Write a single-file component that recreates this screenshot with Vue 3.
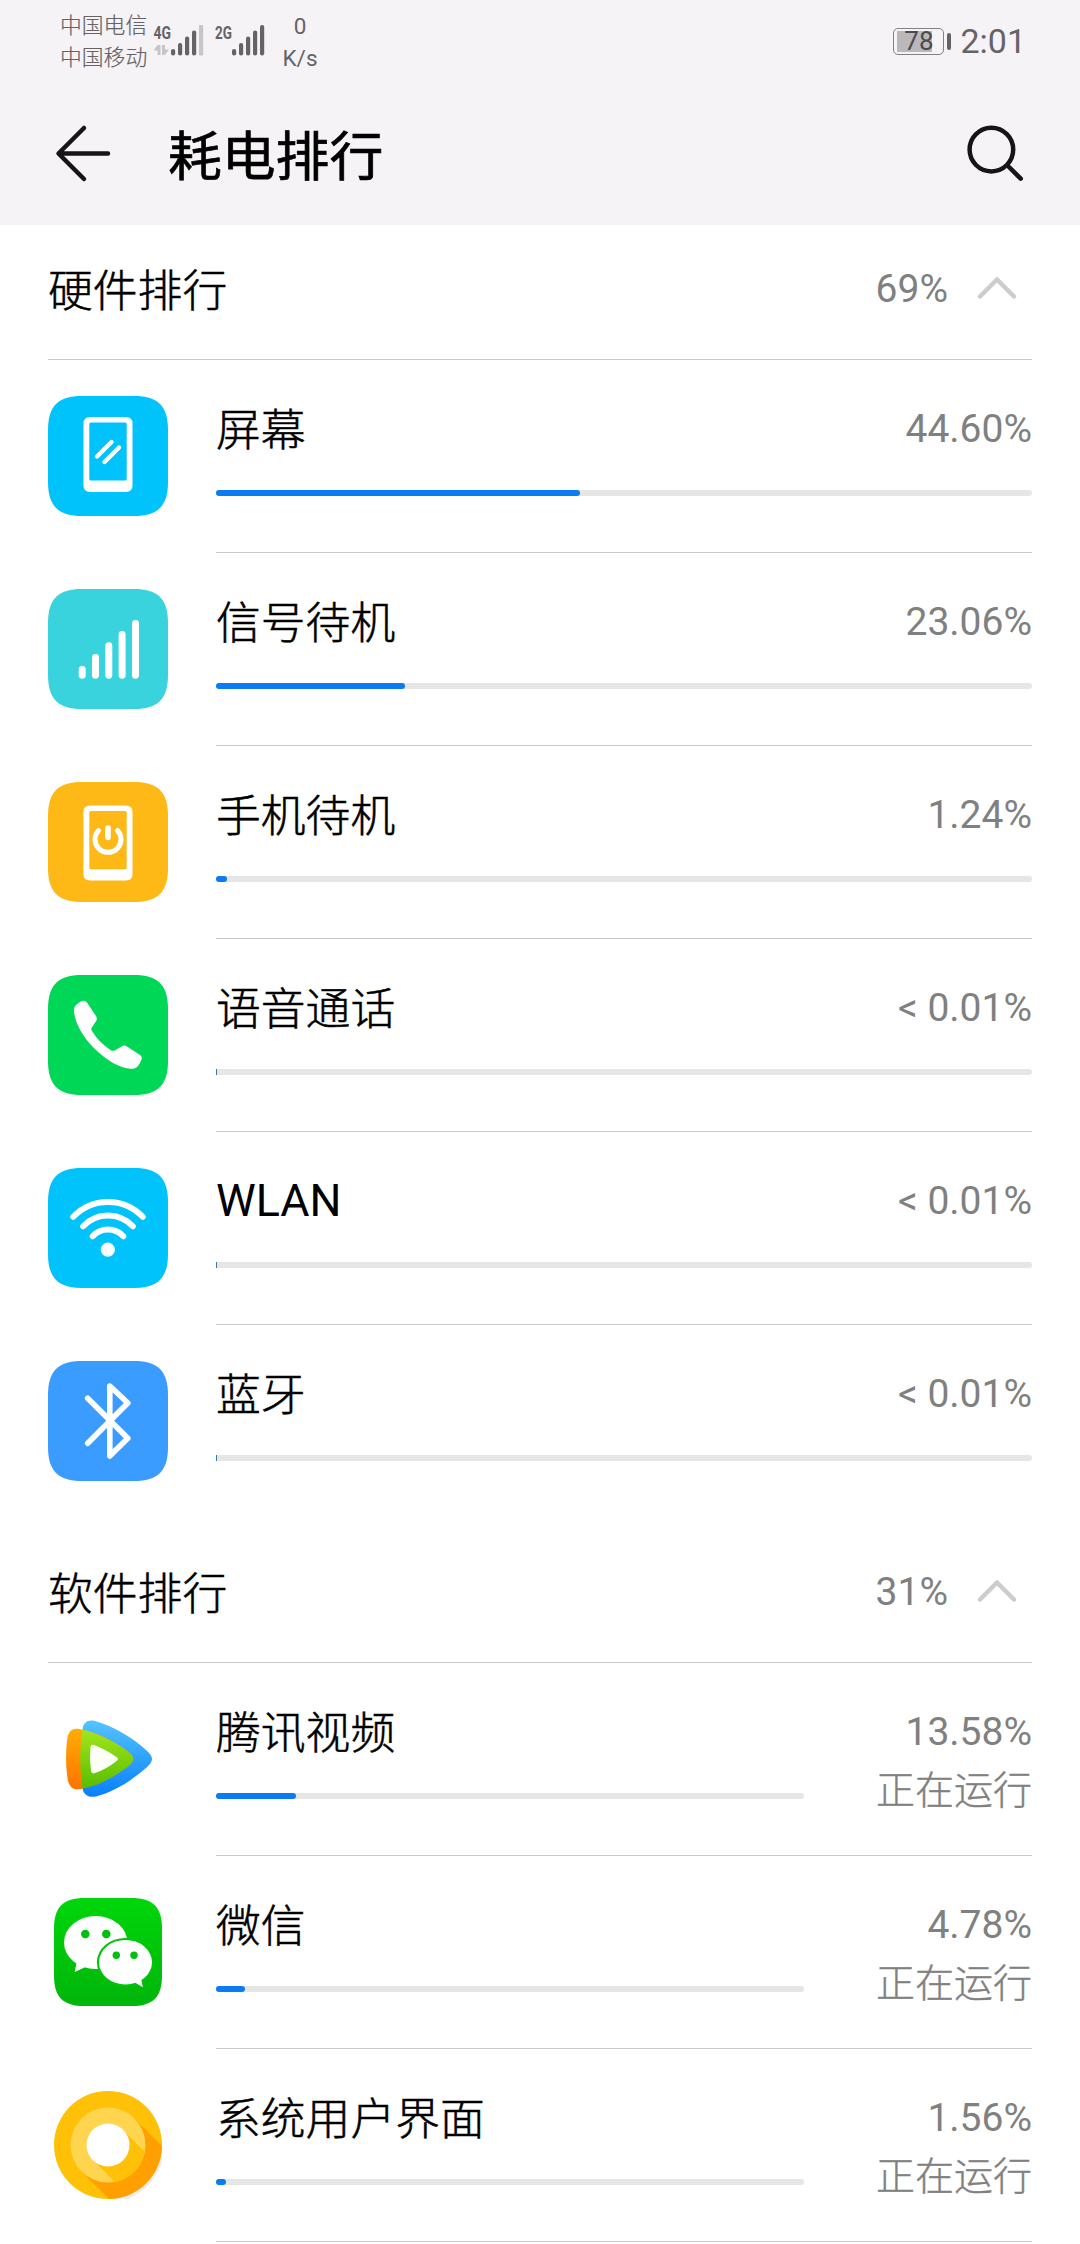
<script setup>
const SQUIRCLE =
  'M34 0H86C110 0 120 10 120 34V86C120 110 110 120 86 120H34C10 120 0 110 0 86V34C0 10 10 0 34 0Z'

const sections = [
  {
    title: '硬件排行',
    total: '69%',
    items: [
      { icon: 'screen', color: '#00c3fb', name: '屏幕', value: '44.60%', fill: 44.6 },
      { icon: 'signal', color: '#38d3dd', name: '信号待机', value: '23.06%', fill: 23.15 },
      { icon: 'standby', color: '#ffb917', name: '手机待机', value: '1.24%', fill: 1.35 },
      { icon: 'call', color: '#00d757', name: '语音通话', value: '< 0.01%', fill: 0 },
      { icon: 'wlan', color: '#00c3fb', name: 'WLAN', value: '< 0.01%', fill: 0, latin: true },
      { icon: 'bluetooth', color: '#3b9cff', name: '蓝牙', value: '< 0.01%', fill: 0 },
    ],
  },
  {
    title: '软件排行',
    total: '31%',
    items: [
      { icon: 'video', name: '腾讯视频', value: '13.58%', fill: 13.6, status: '正在运行' },
      { icon: 'wechat', name: '微信', value: '4.78%', fill: 4.9, status: '正在运行' },
      { icon: 'system', name: '系统用户界面', value: '1.56%', fill: 1.7, status: '正在运行' },
    ],
  },
]
</script>

<template>
  <div class="page">
    <header class="top">
      <div class="statusbar">
        <div class="carriers">
          <span>中国电信</span>
          <span>中国移动</span>
        </div>
        <svg class="signals" width="120" height="40" viewBox="150 21 120 40">
          <g fill="#666367">
            <text x="153.5" y="39" class="net" textLength="17.5" lengthAdjust="spacingAndGlyphs">4G</text>
            <text x="215" y="39" class="net" textLength="17" lengthAdjust="spacingAndGlyphs">2G</text>
            <rect x="171" y="49" width="4.2" height="6.5" rx="2" />
            <rect x="178" y="43" width="4.2" height="12.5" rx="2" />
            <rect x="185" y="36.5" width="4.2" height="19" rx="2" />
            <rect x="192" y="30.5" width="4.2" height="25" rx="2" />
            <rect x="232" y="49" width="4.2" height="6.5" rx="2" />
            <rect x="239" y="43" width="4.2" height="12.5" rx="2" />
            <rect x="246" y="36.5" width="4.2" height="19" rx="2" />
            <rect x="253" y="30.5" width="4.2" height="25" rx="2" />
            <rect x="260" y="25" width="4.2" height="30.5" rx="2" />
          </g>
          <g fill="#c8c5c9">
            <rect x="199" y="25" width="4.2" height="30.5" rx="1" />
            <path d="M157.500 45H160.500V55H157.500V50.500H153.500Z" />
            <path d="M162 45H165V49.500H169L165 55H162Z" />
          </g>
        </svg>
        <div class="speed">
          <span>0</span>
          <span>K/s</span>
        </div>
        <div class="battery">
          <div class="cell"><span>78</span></div>
          <div class="nub"></div>
        </div>
        <div class="clock">2:01</div>
      </div>
      <div class="titlebar">
        <svg class="back" width="60" height="60" viewBox="0 0 60 60">
          <path d="M31 4L5.500 29.500L31 55M6 29.500H55" />
        </svg>
        <h1>耗电排行</h1>
        <svg class="search" width="60" height="60" viewBox="0 0 60 60">
          <circle cx="25.400" cy="25.600" r="21.800" />
          <path d="M41.500 41.500L54.700 54.700" />
        </svg>
      </div>
    </header>

    <section v-for="section in sections" :key="section.title" class="section">
      <div class="heading">
        <h2>{{ section.title }}</h2>
        <span class="total">{{ section.total }}</span>
        <svg class="chevron" width="42" height="26" viewBox="0 0 42 26">
          <path d="M4 20.500L21 3.500L38 20.500" />
        </svg>
      </div>

      <div
        v-for="item in section.items"
        :key="item.name"
        class="row"
        :class="{ running: item.status }"
      >
        <svg class="icon" width="120" height="120" viewBox="0 0 120 120">
          <path v-if="item.color" :d="SQUIRCLE" :fill="item.color" />

          <g v-if="item.icon === 'screen'">
            <path
              fill="#fff"
              fill-rule="evenodd"
              d="M42 21H78Q84.500 21 84.500 27.500V89.500Q84.500 96 78 96H42Q35.500 96 35.500 89.500V27.500Q35.500 21 42 21ZM43 26.500Q41.300 26.500 41.300 28V83Q41.300 84.600 43 84.600H77Q78.700 84.600 78.700 83V28Q78.700 26.500 77 26.500Z"
            />
            <path class="line" stroke-width="4.400" d="M49 60.500L63.500 46M56.500 66L71 51.500" />
          </g>

          <g v-else-if="item.icon === 'signal'" fill="#fff">
            <rect x="30.700" y="77" width="7" height="12.700" rx="3.400" />
            <rect x="44" y="65" width="7" height="24.700" rx="3.400" />
            <rect x="57.300" y="53.300" width="7" height="36.400" rx="3.400" />
            <rect x="70.600" y="42" width="7" height="47.700" rx="3.400" />
            <rect x="84" y="31" width="7" height="58.700" rx="3.400" />
          </g>

          <g v-else-if="item.icon === 'standby'">
            <path
              fill="#fff"
              fill-rule="evenodd"
              d="M42 23.500H78Q84.500 23.500 84.500 30V92Q84.500 98.500 78 98.500H42Q35.500 98.500 35.500 92V30Q35.500 23.500 42 23.500ZM43 29Q41.300 29 41.300 30.500V85.500Q41.300 87.200 43 87.200H77Q78.700 87.200 78.700 85.500V30.500Q78.700 29 77 29Z"
            />
            <path class="line" stroke-width="5" d="M50.500 48.500A13 13 0 1 0 69.500 48.500" />
            <path class="line" stroke-width="5.600" d="M60 46V55.500" />
          </g>

          <path
            v-else-if="item.icon === 'call'"
            fill="#fff"
            d="M28 30C31 27.500 33 26.200 35 25.800C37 25.300 38.500 26.700 39.500 28.300L48 41C49.500 43.500 49 45 47.500 47L43.800 52.500C43 54 43.300 55 44 56C49 64 55 70 62.500 75C64.500 76.300 66 76 67.500 75L74.500 71C76.500 70.200 77.500 70.500 79 71.500L92 80C94 81.500 94.200 83 93.300 85C92.500 87 91.500 89 90 91C88 93.500 85 94 82 93.800C70 92 60 86 49 76C37 65 27 50 26 36C26 33 26.500 31.500 28 30Z"
          />

          <g v-else-if="item.icon === 'wlan'">
            <path
              class="line"
              stroke-width="6"
              d="M25.300 48.800A48 48 0 0 1 94.700 48.800M35.200 58.300A34 34 0 0 1 84.800 58.300M44.700 68.200A21 21 0 0 1 75.300 68.200"
            />
            <circle cx="59.800" cy="81.700" r="7.100" fill="#fff" />
          </g>

          <path
            v-else-if="item.icon === 'bluetooth'"
            class="line"
            stroke-width="5.600"
            d="M39.700 37.300L79.800 77.300L61.800 95V25L79.800 42L39.700 82.300"
          />

          <g v-else-if="item.icon === 'video'">
            <defs>
              <linearGradient id="vBlue" x1="0" y1="0" x2="0" y2="1">
                <stop offset="0" stop-color="#54c4ff" />
                <stop offset="1" stop-color="#087fff" />
              </linearGradient>
              <linearGradient id="vOrange" x1="0" y1="0" x2="0" y2="1">
                <stop offset="0" stop-color="#ffae00" />
                <stop offset="1" stop-color="#ff7300" />
              </linearGradient>
              <linearGradient id="vGreen" x1="0" y1="0" x2="0" y2="1">
                <stop offset="0" stop-color="#a5e61c" />
                <stop offset="1" stop-color="#55bd00" />
              </linearGradient>
              <clipPath id="vClip">
                <path d="M34.500 31C35 24 39 20.800 46 21.800C65 27 85 39 98 51C106 58 106 62 98 69C82 83 65 93 48 97.500C40 99 35 95 34.500 89C31.500 70 31.500 50 34.500 31Z" />
              </clipPath>
            </defs>
            <path fill="url(#vBlue)" d="M34.500 31C35 24 39 20.800 46 21.800C65 27 85 39 98 51C106 58 106 62 98 69C82 83 65 93 48 97.500C40 99 35 95 34.500 89C31.500 70 31.500 50 34.500 31Z" />
            <path fill="url(#vOrange)" d="M19.500 38C21 32 24 29.300 30 29.800C48 33 66 42 80 52.500C87 58 87 62 80 67.500C66 78 48 88 30 90.300C24 90.500 21.500 87 20 82C17.500 68 17.500 52 19.500 38Z" />
            <path fill="url(#vGreen)" clip-path="url(#vClip)" d="M19.500 38C21 32 24 29.300 30 29.800C48 33 66 42 80 52.500C87 58 87 62 80 67.500C66 78 48 88 30 90.300C24 90.500 21.500 87 20 82C17.500 68 17.500 52 19.500 38Z" />
            <path fill="#fbfff5" d="M42.500 48Q43 45 46 46Q58 50.500 68.500 58Q71.500 60 68.500 62Q58 70.500 46.500 74.300Q43.500 75 43 72Q41.200 60 42.500 48Z" />
          </g>

          <g v-else-if="item.icon === 'wechat'">
            <defs>
              <linearGradient id="wGreen" x1="0" y1="0" x2="0" y2="1">
                <stop offset="0" stop-color="#00d60a" />
                <stop offset="1" stop-color="#00b50a" />
              </linearGradient>
            </defs>
            <path :d="SQUIRCLE" fill="url(#wGreen)" transform="translate(6 6) scale(.9)" />
            <g fill="#fff">
              <ellipse cx="47.700" cy="50.500" rx="31.700" ry="26.500" />
              <path d="M28.700 70L26.700 80L37 75.200Z" />
            </g>
            <ellipse cx="77.500" cy="70.200" rx="28.600" ry="24.200" fill="#00c40a" />
            <g fill="#fff">
              <ellipse cx="77.500" cy="70.200" rx="26.500" ry="22.300" />
              <path d="M86 90L94.800 95.200L93 86Z" />
            </g>
            <g fill="#00c00a">
              <circle cx="37.300" cy="42" r="4.300" />
              <circle cx="58.300" cy="42" r="4.300" />
              <circle cx="68.300" cy="63.300" r="3.700" />
              <circle cx="86" cy="63.300" r="3.700" />
            </g>
          </g>

          <g v-else>
            <defs>
              <clipPath id="oOuter"><circle cx="60" cy="60" r="54" /></clipPath>
              <clipPath id="oMiddle"><circle cx="60" cy="60" r="37.500" /></clipPath>
            </defs>
            <path fill="#ededf4" d="M114 64V78Q104 104 80 114H64Z" />
            <circle cx="60" cy="60" r="54" fill="#ffc107" />
            <path clip-path="url(#oOuter)" fill="#ffa000" d="M86.500 33.500L126.500 73.500V126.500H73.500L33.500 86.500Z" />
            <circle cx="60" cy="60" r="37.500" fill="#ffd54f" />
            <path clip-path="url(#oMiddle)" fill="#ffc107" d="M75.100 44.900L115 85V115H85L44.900 75.100Z" />
            <circle cx="60" cy="60" r="21.500" fill="#fff" />
          </g>
        </svg>

        <div class="body">
          <span class="name" :class="{ latin: item.latin }">{{ item.name }}</span>
          <span class="value">{{ item.value }}</span>
          <div class="track">
            <div class="fill" :class="{ sliver: !item.fill }" :style="{ width: item.fill + '%' }"></div>
          </div>
          <span v-if="item.status" class="status">{{ item.status }}</span>
        </div>
      </div>
    </section>
  </div>
</template>

<style>
body {
  margin: 0;
  background: #fff;
}
</style>

<style scoped>
.page {
  width: 1080px;
  height: 2244px;
  overflow: hidden;
  background: #fff;
  color: #000;
  font-family: Roboto, 'Noto Sans CJK SC', sans-serif;
}
h1,
h2 {
  margin: 0;
}
svg {
  display: block;
  flex: none;
}

.top {
  height: 225px;
  background: #f6f3f7;
}
.statusbar {
  display: flex;
  align-items: center;
  height: 82px;
  padding: 0 54px 0 60px;
  box-sizing: border-box;
  color: #666367;
}
.carriers {
  display: flex;
  flex-direction: column;
  width: 90px;
  padding-top: 1px;
  font-size: 21.800px;
  font-weight: 300;
  line-height: 32px;
  white-space: nowrap;
  -webkit-text-stroke: 0.2px currentColor;
}
.net {
  font: 700 19px Roboto, sans-serif;
}
.speed {
  display: flex;
  flex-direction: column;
  align-items: center;
  width: 60px;
  padding-top: 2px;
  font-size: 22.500px;
  line-height: 32px;
}
.battery {
  display: flex;
  align-items: center;
  gap: 3px;
  margin-left: auto;
}
.cell {
  display: flex;
  align-items: center;
  justify-content: center;
  width: 51px;
  height: 27px;
  box-sizing: border-box;
  border: 1.500px solid #848185;
  border-radius: 5px;
  background: linear-gradient(#bbb8bc, #bbb8bc) 3px 2px / 35px 21px no-repeat;
  color: #4c4a4d;
  font-size: 26px;
  line-height: 26px;
}
.nub {
  width: 4px;
  height: 17px;
  border-radius: 2px;
  background: #666367;
}
.clock {
  margin-left: 9px;
  font-size: 34px;
  line-height: 40px;
}
.titlebar {
  display: flex;
  align-items: center;
  height: 143px;
  padding: 0 54px 0 53px;
}
.back,
.search {
  fill: none;
  stroke: #151515;
  stroke-width: 4.500px;
  stroke-linecap: round;
  stroke-linejoin: round;
}
h1 {
  flex: 1;
  margin-left: 55px;
  padding-top: 9px;
  font-size: 53.800px;
  font-weight: 400;
  line-height: 80px;
  -webkit-text-stroke: 0.7px currentColor;
}

.section + .section {
  margin-top: 10px;
}
.heading {
  display: flex;
  align-items: center;
  height: 128px;
  margin: 0 48px;
  padding: 0 14px 6px 0;
  border-bottom: 1px solid #c9c9c9;
}
h2 {
  flex: 1;
  padding-bottom: 3px;
}
h2,
.name {
  font-size: 44.800px;
  font-weight: 300;
  -webkit-text-stroke: 0.5px currentColor;
}
.total,
.value,
.status {
  color: #808080;
  font-size: 39px;
}
.chevron {
  margin: 0 0 1px 28px;
  fill: none;
  stroke: #ccc;
  stroke-width: 4.500px;
  stroke-linecap: round;
  stroke-linejoin: round;
}

.row {
  display: flex;
  height: 193px;
  margin: 0 48px;
}
.icon {
  margin: 36px 48px 0 0;
}
.line {
  fill: none;
  stroke: #fff;
  stroke-linecap: round;
  stroke-linejoin: round;
}
.body {
  display: grid;
  flex: 1;
  grid-template-columns: 1fr auto;
  grid-template-rows: 65px 64px;
  align-items: center;
  padding-top: 36px;
  border-bottom: 1px solid #c9c9c9;
}
.section:first-of-type .row:last-child .body {
  border-bottom-color: transparent;
}
.name {
  padding-top: 4px;
  line-height: 60px;
}
.name.latin {
  padding-top: 0;
  font-weight: 400;
  -webkit-text-stroke: 0;
}
.value {
  text-align: right;
}
.track {
  grid-column: 1 / -1;
  height: 6px;
  border-radius: 3px;
  background: #e6e6e6;
}
.fill {
  height: 6px;
  border-radius: 3px;
  background: #0a7bf0;
}
.fill.sliver {
  min-width: 1px;
  border-radius: 0;
  background: #3579a8;
}
.running .body {
  grid-template-columns: 588px 1fr;
}
.running .track {
  grid-column: 1;
}
.status {
  align-self: start;
  padding-top: 1px;
  font-weight: 300;
  line-height: 52px;
  text-align: right;
  -webkit-text-stroke: 0.4px currentColor;
}
</style>
